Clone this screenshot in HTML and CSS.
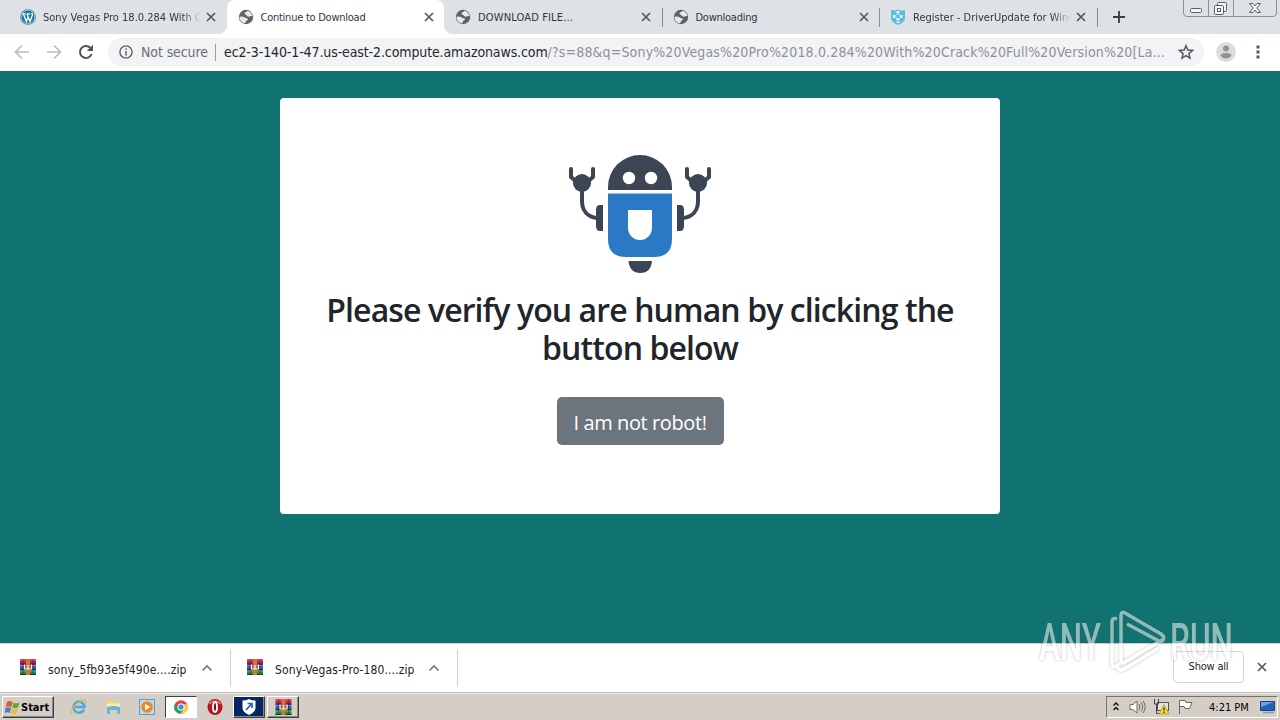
FILE: index.html
```
<!DOCTYPE html>
<html lang="en">
<head>
  <meta charset="UTF-8" />
  <title>Continue to Download</title>
  <link rel="stylesheet" href="styles.css">
</head>
<body>
  <!-- shared icons -->
  <svg class="defs">
    <defs>
      <symbol id="globe" viewBox="0 0 16 16">
        <circle cx="8" cy="8" r="7.2" fill="#5f6368"/>
        <path d="M1.500 7.800Q4.500 7 6.500 8.300q1 1 2.500.9c1.500.5.8 2-.2 2.300-1 .5-.8 1.500-1.800 2.800C3.500 13.800 1.200 11 1.500 7.800zM9.500 1.800c-.3 1.500-2.800 1-3 2.500s1.300 1.200 2 2 1.700 1.900 3 1.200 1.800-.8 3-.3C14.200 4.500 12 2.300 9.500 1.800z" fill="#e6e8ec"/>
      </symbol>
      <symbol id="close" viewBox="0 0 10 10">
        <path d="M1 1l8 8M9 1L1 9" stroke="#55595e" stroke-width="1.7"/>
      </symbol>
      <symbol id="up" viewBox="0 0 12 8">
        <path d="M1.500 6.500L6 2l4.500 4.500" fill="none" stroke="#777" stroke-width="1.700"/>
      </symbol>
      <symbol id="rar" viewBox="0 0 16 16">
        <rect width="16" height="5" y="0" fill="#c2244c"/>
        <rect width="16" height="5" y="5" fill="#4453b4"/>
        <rect width="16" height="6" y="10" fill="#199044"/>
        <path d="M0 5h16M0 10.500h16M0 15.500h16" stroke="#26182c" stroke-width=".8"/>
        <path d="M0 1h16M0 6.500h16M0 12h16" stroke="#fff" stroke-opacity=".35"/>
        <rect x="6" width="4" height="16" fill="#d3742f"/>
        <path d="M3 .5v15M13 .5v15" stroke="#27202c" stroke-opacity=".5"/>
        <path d="M4.500 5.500V10h7V5.500M8 6v4" fill="none" stroke="#fff4d6" stroke-width="1.200"/>
      </symbol>
      <symbol id="hand" viewBox="0 0 40 66">
        <path d="M4 3v8l8 7M26 3v8l-8 7" fill="none" stroke="#3b4554" stroke-width="4" stroke-linecap="round" stroke-linejoin="round"/>
        <circle cx="15" cy="17" r="9" fill="#3b4554"/>
        <path d="M15 24v11c0 10 6 16 15 17" fill="none" stroke="#3b4554" stroke-width="4"/>
        <path d="M36 39v26h-3q-4 0-4-5V44q0-5 4-5z" fill="#3b4554"/>
      </symbol>
    </defs>
  </svg>

  <!-- tab strip -->
  <div class="tabs">
    <div class="tab">
      <svg class="fav" viewBox="0 0 16 16">
        <circle cx="8" cy="8" r="7.800" fill="#21759b"/>
        <circle cx="8" cy="8" r="6.900" fill="none" stroke="#dcebf2" stroke-width=".7"/>
        <path d="M2.300 4.900h3.400M6.700 4.900h3.600M3.400 5l3 7.600L8.200 8M6.900 5l3.100 7.600 2.300-6.200c.3-1-.5-1.700-.4-2.700" fill="none" stroke="#fff" stroke-width="1.300"/>
      </svg>
      <span class="title t1">Sony Vegas Pro 18.0.284 With Crack</span>
      <svg class="x"><use href="#close"/></svg>
    </div>
    <div class="tab active">
      <svg class="fav"><use href="#globe"/></svg>
      <span class="title t2">Continue to Download</span>
      <svg class="x"><use href="#close"/></svg>
    </div>
    <div class="tab">
      <svg class="fav"><use href="#globe"/></svg>
      <span class="title t3">DOWNLOAD FILE...</span>
      <svg class="x"><use href="#close"/></svg>
    </div>
    <div class="tab line">
      <svg class="fav"><use href="#globe"/></svg>
      <span class="title t4">Downloading</span>
      <svg class="x"><use href="#close"/></svg>
    </div>
    <div class="tab line">
      <svg class="fav" viewBox="0 0 16 16">
        <path d="M1 1q3.500 1 7-.5Q11.500 2 15 1v8q0 4-7 7-7-3-7-7z" fill="#5dbbdc"/>
        <path d="M8 2v12M3 7.500h10" stroke="#e9f8fd" stroke-width="3" stroke-dasharray="2.500 1"/>
        <path d="M6.500 6h3v3h-3z" fill="#5dbbdc"/>
      </svg>
      <span class="title t5">Register - DriverUpdate for Windows</span>
      <svg class="x"><use href="#close"/></svg>
    </div>
    <div class="newtab line">
      <svg viewBox="0 0 12 12"><path d="M6 0v12M0 6h12" stroke="#3c4043" stroke-width="1.900"/></svg>
    </div>
    <div class="winbtns">
      <svg viewBox="0 0 94 18">
        <path d="M.5 0v13q0 3.500 3.500 3.500h86q3.500 0 3.500-3.500V0M25.500 0v16.500M50.500 0v16.500" fill="none" stroke="#8b8f98"/>
        <g fill="#f5f6f8" stroke="#5a5f68">
          <rect x="7.500" y="8.500" width="11" height="4" rx="1"/>
          <rect x="34.500" y="2.500" width="9" height="9" rx="1"/>
          <rect x="31.500" y="5.500" width="9" height="9" rx="1"/>
          <rect x="34.500" y="8.500" width="3" height="3"/>
          <path d="M66.500 3.500h3.500l2 2.500 2-2.500h3.500l-3.600 4.500 3.600 4.500h-3.500l-2-2.500-2 2.500h-3.500l3.600-4.500z"/>
        </g>
      </svg>
    </div>
  </div>

  <!-- toolbar -->
  <div class="toolbar">
    <svg class="nav" viewBox="0 0 16 16"><path d="M15 8H2M8 1.500L1.500 8 8 14.500" fill="none" stroke="#babcbe" stroke-width="1.700"/></svg>
    <svg class="nav" viewBox="0 0 16 16"><path d="M1 8h13M8 1.500L14.500 8 8 14.500" fill="none" stroke="#babcbe" stroke-width="1.700"/></svg>
    <svg class="nav" viewBox="0 0 16 16"><path d="M13.600 10A6 6 0 1 1 12.300 3.800L14 5.500" fill="none" stroke="#505357" stroke-width="2"/><path d="M15 .8V7H8.800z" fill="#505357"/></svg>
    <div class="omnibox">
      <svg class="info" viewBox="0 0 14 14"><circle cx="7" cy="7" r="6.100" fill="none" stroke="#5f6368" stroke-width="1.400"/><path d="M7 6v4.500M7 3.400V5" stroke="#5f6368" stroke-width="1.500"/></svg>
      <span class="secure">Not secure</span>
      <span class="url"><span class="host">ec2-3-140-1-47.us-east-2.compute.amazonaws.com</span><span class="path">/?s=88&amp;q=Sony%20Vegas%20Pro%2018.0.284%20With%20Crack%20Full%20Version%20[La...</span></span>
      <svg class="star" viewBox="0 0 16 16"><path d="M8 1.700l1.800 4.400 4.700.4-3.600 3.100 1.100 4.600-4-2.500-4 2.500 1.100-4.600-3.600-3.100 4.700-.4z" fill="none" stroke="#55595e" stroke-width="1.500"/></svg>
    </div>
    <svg class="avatar" viewBox="0 0 20 20"><circle cx="10" cy="10" r="10" fill="#dcdcdc"/><circle cx="10" cy="6.500" r="3" fill="#929292"/><path d="M4.500 13.500q0-2.500 5.500-2.500t5.500 2.500q-2 3-5.500 3t-5.500-3z" fill="#929292"/></svg>
    <svg class="dots" viewBox="0 0 4 16"><path d="M.5 1.500h3v3h-3zM.5 6.500h3v3h-3zM.5 11.500h3v3h-3z" fill="#55595e"/></svg>
  </div>

  <!-- page -->
  <main>
    <div class="card">
      <svg class="robot" viewBox="0 0 144 119">
        <path d="M40 35v-3a32 32 0 0 1 64 0v3z" fill="#3b4554"/>
        <circle cx="61" cy="23" r="6.200" fill="#fff"/>
        <circle cx="83" cy="23" r="6.200" fill="#fff"/>
        <path d="M40 38.500h64V84q0 18-18 18H58Q40 102 40 84z" fill="#2b79c4"/>
        <path d="M60 55h24v18a12 12 0 0 1-24 0z" fill="#fff"/>
        <path d="M60.500 106h23.500q-1 12-11.700 12t-11.800-12z" fill="#3b4554"/>
        <use href="#hand" x="-1" y="11" width="40" height="66"/>
        <use href="#hand" x="-1" y="11" width="40" height="66" transform="translate(144 0) scale(-1 1)"/>
      </svg>
      <h2>Please verify you are human by clicking the button below</h2>
      <button>I am not robot!</button>
    </div>
  </main>

  <!-- downloads -->
  <div class="downloads">
    <div class="item">
      <svg class="rar"><use href="#rar"/></svg>
      <span class="d1">sony_5fb93e5f490e....zip</span>
      <svg class="up"><use href="#up"/></svg>
    </div>
    <div class="item second">
      <svg class="rar"><use href="#rar"/></svg>
      <span class="d2">Sony-Vegas-Pro-180....zip</span>
      <svg class="up"><use href="#up"/></svg>
    </div>
    <div class="showall">Show all</div>
    <svg class="x"><use href="#close"/></svg>
  </div>

  <!-- taskbar -->
  <div class="taskbar">
    <div class="start">
      <svg viewBox="0 0 16 15">
        <path d="M2 2q3-2 5.500 0L6.300 7q-2.600-1.700-5.600 0z" fill="#e6532b"/>
        <path d="M8.500 2.500q3 1.700 6 0L13.200 7.300q-3 1.700-6 0z" fill="#62a83b"/>
        <path d="M.5 8q3-1.700 5.600 0L4.800 13q-2.700-1.700-5 0z" fill="#3e80cf"/>
        <path d="M7 8.500q3 1.700 6 0l-1.300 4.700q-3 1.700-6 0z" fill="#f2ba29"/>
      </svg>
      <b>Start</b>
    </div>
    <div class="quick">
      <svg viewBox="0 0 18 18">
        <path d="M14 11.500A5.500 5.500 0 1 1 14.500 9H5" fill="none" stroke="#4aa9df" stroke-width="2.600"/>
        <path d="M2.500 15.500C-1 15 5 5 12 2.500c4-1.500 5 .5 3.500 3" fill="none" stroke="#e2b73b" stroke-width="1.300"/>
      </svg>
    </div>
    <div class="quick">
      <svg viewBox="0 0 18 18">
        <path d="M2 4V2h5l1 2h7v9H2z" fill="#efd573"/>
        <path d="M3 5.500h13V10H3z" fill="#faeeb2"/>
        <path d="M3 9q6-2 13 0v7h-3v-4H6v4H3z" fill="#66b4dd"/>
      </svg>
    </div>
    <div class="quick">
      <svg viewBox="0 0 18 18">
        <rect x="1.500" y="1.500" width="15" height="15" fill="#b9daf0" stroke="#629bc6"/>
        <circle cx="9" cy="9" r="5.800" fill="#ee8622"/>
        <path d="M7 5.700v6.600L12.300 9z" fill="#fff"/>
      </svg>
    </div>
    <div class="quick pressed">
      <svg viewBox="0 0 18 18">
        <circle cx="9" cy="9" r="6.800" fill="#dc4538"/>
        <path d="M3.100 5.600A6.800 6.800 0 0 0 8.500 15.800L12 10.500 6 10.500z" fill="#2aa052"/>
        <path d="M15.200 6.200A6.800 6.800 0 0 1 8.500 15.800L12 10.500 10 6.200z" fill="#f8cc3f"/>
        <circle cx="9" cy="9" r="3.200" fill="#4689ee" stroke="#fff"/>
      </svg>
    </div>
    <div class="quick">
      <svg viewBox="0 0 18 18">
        <ellipse cx="9" cy="9" rx="7.500" ry="8" fill="#b3161c"/>
        <path d="M3 6q6-6 12 0" stroke="#ec7777" stroke-width="1.500" fill="none"/>
        <ellipse cx="9" cy="9" rx="2" ry="5" fill="#851014" stroke="#fff" stroke-width="1.900"/>
      </svg>
    </div>
    <div class="quick raised navy">
      <svg viewBox="0 0 18 18">
        <path d="M2.500 2.500q4 0 6.500-1.500 2.500 1.500 6.500 1.500V10q0 4-6.500 7-6.500-3-6.500-7z" fill="#fff"/>
        <path d="M6 12l5.500-6M7.500 5.500H12V10" fill="none" stroke="#2364b0" stroke-width="1.700"/>
      </svg>
    </div>
    <div class="quick raised"><svg class="rar"><use href="#rar"/></svg></div>

    <div class="tray">
      <svg class="chev" viewBox="0 0 8 10"><path d="M1.500 4.500L4 2l2.500 2.500M1.500 9L4 6.500 6.500 9" fill="none" stroke="#111" stroke-width="1.400"/></svg>
      <svg class="vol" viewBox="0 0 17 14">
        <path d="M1 4.500h3L8 1v12L4 9.500H1z" fill="#fff" stroke="#6b6b6b"/>
        <path d="M10 4q2 3 0 6M12 2.500q3.500 4.500 0 9M14 1q4.500 6 0 12" fill="none" stroke="#6b6b6b"/>
      </svg>
      <svg class="net" viewBox="0 0 17 16">
        <rect x="4.500" y="3.500" width="11" height="8" fill="#dfe3e6" stroke="#555"/>
        <path d="M1.500 0v5h4V0M3.500 5v9.500h5" fill="none" stroke="#444"/>
        <path d="M11 5.500l5 9.500H6z" fill="#f7d93a" stroke="#b79210" stroke-width=".7"/>
        <path d="M11 8.500v3M11 12.500V14" stroke="#222" stroke-width="1.200"/>
      </svg>
      <svg class="flag" viewBox="0 0 16 16"><path d="M2.500 15V1.500h5.500l1 2h6L12.500 9.500H8l-1-2H2.500" fill="#fff" stroke="#666"/></svg>
      <span class="clock">4:21 PM</span>
      <svg class="desk" viewBox="0 0 16 14">
        <path d="M.5 1.500h14v9H.5z" fill="#2360b5" stroke="#1d3f79"/>
        <path d="M1 2h13L1 7z" fill="#67a4e6"/>
        <path d="M3 12.500h11" stroke="#879ab4" stroke-width="1.500"/>
      </svg>
    </div>
  </div>

  <!-- watermark over everything -->
  <svg class="mark" viewBox="0 0 200 70">
    <text x="2" y="52.500" textLength="62" lengthAdjust="spacingAndGlyphs">ANY</text>
    <path d="M80 12q-5-2-5 3v42q0 4 4 2l5-3M125 33L88 55q-4 2-4-2V8q0-4 4-2l36 21q4 3 2 6-2 3-6 0L90 17M80 60q3 5 7 2l35-21"/>
    <text x="133" y="52.500" textLength="63" lengthAdjust="spacingAndGlyphs">RUN</text>
  </svg>
</body>
</html>
```

FILE: styles.css
```
*{box-sizing:border-box;}

body{
  margin:0;
  width:1280px;
  height:720px;
  overflow:hidden;
  display:flex;
  flex-direction:column;
  background:#fff;
  font-family:"DejaVu Sans Condensed","DejaVu Sans",sans-serif;
  color:#222;
}
svg{display:block;flex:none;}
.defs{position:absolute;width:0;height:0;}

/* ---- tab strip ---- */
.tabs{
  height:34px;
  display:flex;
  padding-left:9px;
  background:#dee1e6;
}
.tab{
  position:relative;
  width:217.5px;
  height:34px;
  flex:none;
  display:flex;
  align-items:center;
  padding-left:11px;
}
.fav{width:16px;height:16px;margin-right:7px;}
.title{
  width:158px;
  margin-right:5px;
  overflow:hidden;
  white-space:nowrap;
  font-size:11px;
  color:#33363b;
}
.t1,.t5{
  -webkit-mask-image:linear-gradient(90deg,#000 88%,transparent 100%);
  mask-image:linear-gradient(90deg,#000 88%,transparent 100%);
}
.t2,.t4{letter-spacing:-.25px;}
.t3{letter-spacing:.15px;}
.x{width:10px;height:10px;}
.active{background:#fff;border-radius:8px 8px 0 0;}
.active::before,.active::after{
  content:"";
  position:absolute;
  bottom:0;
  width:8px;
  height:8px;
}
.active::before{left:-8px;background:radial-gradient(circle at 0 0,transparent 7.5px,#fff 8px);}
.active::after{right:-8px;background:radial-gradient(circle at 100% 0,transparent 7.5px,#fff 8px);}
.line{background:linear-gradient(#8a8d93,#8a8d93) 0 8px/1px 19px no-repeat;}
.newtab{width:40px;padding:11px 0 0 16px;}
.newtab svg{width:12px;height:12px;}
.winbtns{margin-left:auto;margin-right:3px;}
.winbtns svg{width:94px;height:18px;}

/* ---- toolbar ---- */
.toolbar{
  height:37px;
  display:flex;
  align-items:center;
  padding:0 0 1px 14px;
}
.nav{width:16px;height:16px;margin-right:16px;}
.omnibox{
  width:1096px;
  height:28px;
  margin-left:-2px;
  border-radius:14px;
  background:#f1f3f4;
  display:flex;
  align-items:center;
  padding-left:11px;
  font-size:14px;
  white-space:nowrap;
}
.info{width:14px;height:14px;margin-right:8px;}
.secure{
  width:75px;
  color:#6a6e73;
  letter-spacing:-.1px;
  border-right:1px solid #9a9da1;
  line-height:17px;
}
.url{width:954px;margin-left:8px;}
.host{color:#25282c;letter-spacing:-.11px;}
.path{color:#8d9196;letter-spacing:.16px;}
.star{width:16px;height:16px;}
.avatar{width:20px;height:20px;margin-left:12px;}
.dots{width:4px;height:16px;margin-left:20px;}

/* ---- page ---- */
main{
  height:572px;
  padding-top:27px;
  background:#117371;
}
.card{
  width:720px;
  height:416px;
  margin:0 auto;
  padding:57px 40px 0;
  background:#fff;
  border-radius:4px;
  text-align:center;
}
.robot{width:144px;height:119px;margin:0 auto;}
h2{
  margin:17px 0 29px;
  font:600 32px/38.4px "Open Sans",sans-serif;
  letter-spacing:-.9px;
  color:#212529;
}
button{
  width:167px;
  height:48px;
  padding:4px 0 0;
  border:0;
  border-radius:5px;
  background:#6c757d;
  color:#fff;
  font:400 20px/30px "Open Sans",sans-serif;
  letter-spacing:-.4px;
  white-space:nowrap;
}

/* ---- downloads bar ---- */
.downloads{
  height:50px;
  display:flex;
  align-items:center;
  border-top:1px solid #c9ced0;
  border-bottom:1px solid #bcbcbc;
}
.item{
  width:231px;
  height:38px;
  display:flex;
  align-items:center;
  padding-left:20px;
  border-right:1px solid #d0d0d0;
  font-size:12px;
  letter-spacing:.11px;
}
.item.second{width:227px;padding-left:16px;}
.item span{width:140px;margin:3px 13px 0 12px;white-space:nowrap;}
.rar{width:16px;height:16px;}
.item .rar{margin-top:-3px;}
.up{width:12px;height:8px;}
.showall{
  width:71px;
  height:32px;
  margin-left:auto;
  margin-right:13px;
  margin-bottom:2px;
  border:1px solid #d4d6d9;
  border-radius:4px;
  font-size:11px;
  letter-spacing:-.2px;
  line-height:30px;
  text-align:center;
}
.downloads > .x{margin:0 13px 2px 0;}

/* ---- taskbar ---- */
.taskbar{
  height:27px;
  display:flex;
  align-items:center;
  padding:0 2px;
  background:#d5cec7;
  border-top:1px solid #efece8;
}
.start,.raised{
  border:1px solid;
  border-color:#fff #404040 #404040 #fff;
  box-shadow:inset -1px -1px #8a8680;
}
.start{
  width:52px;
  height:22px;
  margin-right:9px;
  display:flex;
  align-items:center;
  padding-left:2px;
  font-size:11px;
  color:#000;
}
.start svg{width:16px;height:15px;}
.quick{
  width:32px;
  height:22px;
  margin-right:2px;
  display:flex;
  align-items:center;
  justify-content:center;
}
.quick svg{width:18px;height:18px;}
.quick .rar{width:17px;height:16px;}
.pressed{background:#fff;border:1px solid;border-color:#404040 #fff #fff #404040;}
.navy{background:#062663;}
.tray{
  width:172px;
  height:22px;
  margin-left:auto;
  display:flex;
  align-items:center;
  padding-left:5px;
  border:1px solid;
  border-color:#77736e #fff #fff #77736e;
}
.chev{width:8px;height:10px;margin-top:-3px;}
.vol{width:17px;height:14px;margin-left:9px;}
.net{width:17px;height:16px;margin-left:7px;}
.flag{width:16px;height:16px;margin-left:7px;}
.clock{width:41px;margin-left:16px;font-size:11px;color:#000;white-space:nowrap;}
.desk{width:16px;height:14px;margin-left:10px;}

/* ---- watermark ---- */
.mark{
  position:absolute;
  left:1037px;
  top:607px;
  width:200px;
  height:70px;
  opacity:.52;
  filter:drop-shadow(0 0 1.5px rgba(70,70,70,.65));
}
.mark text{font:500 52px Roboto,sans-serif;fill:#fff;}
.mark path{fill:none;stroke:#fff;stroke-width:3.5;}
```
